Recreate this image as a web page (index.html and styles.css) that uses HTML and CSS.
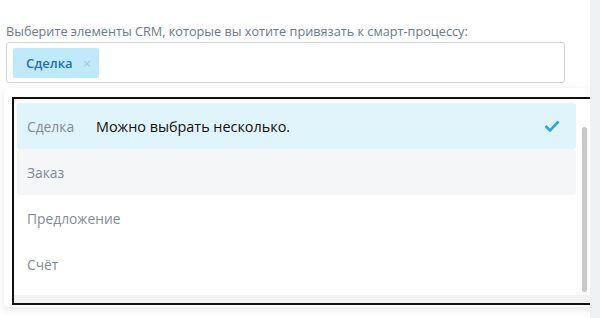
FILE: index.html
```html
<!DOCTYPE html>
<html lang="ru">
    <head>
        <meta charset="UTF-8">
        <meta name="viewport" content="width=device-width, initial-scale=1.0">
        <title>CRM</title>
        <link rel="stylesheet" href="styles.css">
    </head>
    <body>
        <div class="page">
            <div class="main">
                <div class="label">Выберите элементы CRM, которые вы хотите привязать к смарт-процессу:</div>
                <div class="field">
                    <span class="tag">Сделка <span class="tag-x">&times;</span></span>
                </div>
                <div class="popup">
                    <div class="frame">
                        <div class="list">
                            <div class="item selected">
                                <span class="item-name">Сделка</span>
                                <span class="hint">Можно выбрать несколько.</span>
                                <svg class="check" width="16" height="12" viewBox="0 0 16 12">
                                    <polyline points="1.5,6 6,10.5 14.5,1.5" fill="none" stroke="#2fa8e0" stroke-width="2.6"/>
                                </svg>
                            </div>
                            <div class="item hover"><span class="item-name">Заказ</span></div>
                            <div class="item"><span class="item-name">Предложение</span></div>
                            <div class="item"><span class="item-name">Счёт</span></div>
                        </div>
                        <div class="scroll"><div class="thumb"></div></div>
                    </div>
                </div>
            </div>
            <div class="side"></div>
        </div>
    </body>
</html>
```

FILE: styles.css
```css
*{
    margin: 0;
    padding: 0;
    box-sizing: border-box;
}

body{
    height: 100vh;
    overflow: hidden;
    background: #fff;
    font-family: "Open Sans", "Liberation Sans", sans-serif;
}

.page{
    display: flex;
    height: 100%;
}

.main{
    flex: 1;
    padding: 22px 0 0 6px;
}

.side{
    width: 15px;
    background: #eef2f4;
}

.label{
    font-size: 12.7px;
    line-height: 18px;
    color: #6f7a84;
}

.field{
    width: 559px;
    height: 41px;
    margin-top: 2px;
    padding: 5px 6px;
    border: 1px solid #cdd3d7;
    border-radius: 3px;
    display: flex;
    align-items: center;
}

.tag{
    display: flex;
    align-items: center;
    height: 30px;
    width: 86px;
    padding-left: 13px;
    background: #bfeafc;
    border-radius: 2px;
    color: #1f6fb8;
    font-size: 13px;
    font-weight: 600;
}

.tag-x{
    margin-left: 10px;
    color: #a9c6d2;
    font-weight: 400;
    font-size: 15px;
}

.popup{
    margin: 5px 0 0 -2px;
    width: 586px;
    padding: 9px 0 2px 8px;
    background: #fff;
    box-shadow: 0 2px 8px rgba(0, 0, 0, 0.1);
    border-radius: 4px;
}

.frame{
    display: flex;
    width: 582px;
    height: 208px;
    border: 2px solid #111;
    background: #fff;
    padding: 4px 5px 0 3px;
    box-shadow: inset 0 -8px 0 #f3f3f3;
}

.list{
    width: 559px;
}

.item{
    display: flex;
    align-items: center;
    height: 46px;
    padding: 0 10px;
    border-radius: 3px;
    font-size: 13.8px;
    color: #828b95;
}

.item.selected{
    background: #dff4fb;
}

.item.hover{
    background: #f5f6f7;
}

.item-name{
    width: 69px;
}

.hint{
    flex: 1;
    color: #111;
    font-size: 14.4px;
    font-weight: 500;
}

.check{
    margin-right: 6px;
}

.scroll{
    margin: 24px 0 0 6px;
    width: 5px;
}

.thumb{
    height: 165px;
    background: #c8c8c8;
    border-radius: 3px;
}
```
